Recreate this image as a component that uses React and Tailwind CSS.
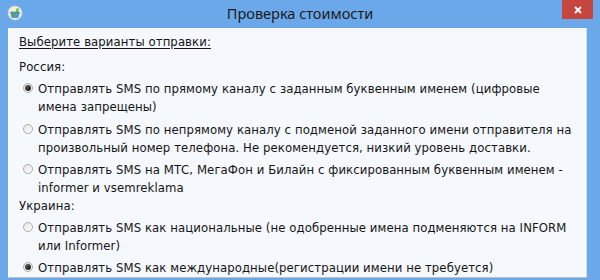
const Radio = ({ checked }) => (
  <span className="mt-[3px] flex h-[10px] w-[10px] shrink-0 items-center justify-center rounded-full border border-[#adadad] bg-gradient-to-br from-[#e4e4e4] to-white">
    {checked && (
      <span className="h-[6px] w-[6px] rounded-full bg-gradient-to-br from-[#6a6a6a] to-[#0e0e0e]" />
    )}
  </span>
);

const Option = ({ checked, className = "", children }) => (
  <div className={`flex gap-[5px] pl-[4px] ${className}`}>
    <Radio checked={checked} />
    <span>{children}</span>
  </div>
);

export default function App() {
  return (
    <div className="flex h-[280px] w-[600px] flex-col overflow-hidden bg-[#6ba8e9]">
      <div className="relative flex h-[28px] shrink-0 items-center justify-center">
        <svg className="absolute left-[7px] top-[5px]" width="16" height="16" viewBox="0 0 16 16">
          <circle cx="8" cy="8" r="7" fill="#f1efd6" stroke="#c9d3d8" strokeWidth="0.8" />
          <path d="M3.5 7 L12.5 7 L11 12.5 L5 12.5 Z" fill="#4b9fd8" stroke="#2f78b3" strokeWidth="0.6" />
          <path d="M5 8.5 L7 10.5 L11.5 4" fill="none" stroke="#5aa844" strokeWidth="1.6" />
          <circle cx="10.5" cy="4.5" r="1.5" fill="#86c35c" />
        </svg>
        <span className="text-[14.5px] text-[#1b1b1b]" style={{ fontFamily: "'Noto Sans', sans-serif" }}>
          Проверка стоимости
        </span>
        <div className="absolute right-[7px] top-0 flex h-[19px] w-[31px] items-center justify-center bg-[#c6463f]">
          <svg width="8" height="8" viewBox="0 0 8 8">
            <path d="M1 1 L7 7 M7 1 L1 7" stroke="white" strokeWidth="1.8" />
          </svg>
        </div>
      </div>
      <div className="mb-[2px] ml-[8px] mr-[13px] flex-1 border-b border-l border-r border-b-[#b9c2cc] border-l-white border-r-[#d6dde5] bg-[#f5f8fc] pl-[10px] pr-[4px] pt-[5px] text-[13px] leading-[18px] tracking-[0.08px] text-[#161616]"
        style={{ fontFamily: "'DejaVu Sans Condensed', 'DejaVu Sans', sans-serif" }}>
        <div className="underline underline-offset-2">Выберите варианты отправки:</div>
        <div className="mt-[7px]">Россия:</div>
        <Option checked className="mt-[4px]">
          Отправлять SMS по прямому каналу с заданным буквенным именем (цифровые имена запрещены)
        </Option>
        <Option className="mt-[5px]">
          Отправлять SMS по непрямому каналу с подменой заданного имени отправителя на произвольный номер телефона. Не рекомендуется, низкий уровень доставки.
        </Option>
        <Option className="mt-[4px]">
          Отправлять SMS на МТС, МегаФон и Билайн с фиксированным буквенным именем - informer и vsemreklama
        </Option>
        <div>Украина:</div>
        <Option className="mt-[4px]">
          Отправлять SMS как национальные (не одобренные имена подменяются на INFORM или Informer)
        </Option>
        <Option checked className="mt-[4px]">
          Отправлять SMS как международные(регистрации имени не требуется)
        </Option>
      </div>
    </div>
  );
}
